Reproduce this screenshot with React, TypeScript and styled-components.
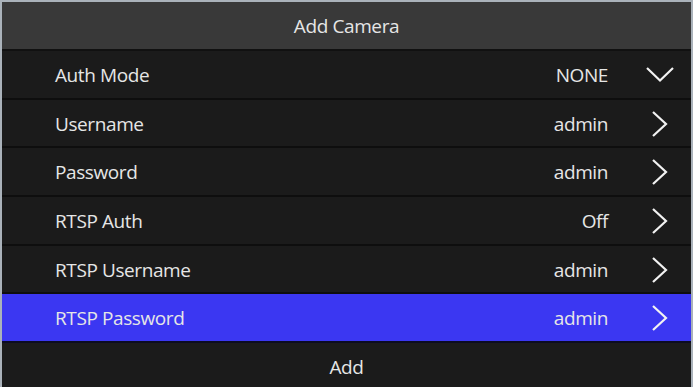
import React from "react";
import styled, { createGlobalStyle } from "styled-components";

interface Setting {
  label: string;
  value: string;
  kind: "down" | "right";
}

const settings: Setting[] = [
  { label: "Auth Mode", value: "NONE", kind: "down" },
  { label: "Username", value: "admin", kind: "right" },
  { label: "Password", value: "admin", kind: "right" },
  { label: "RTSP Auth", value: "Off", kind: "right" },
  { label: "RTSP Username", value: "admin", kind: "right" },
  { label: "RTSP Password", value: "admin", kind: "right" },
];

const ChevronRight = () => (
  <svg width="18" height="28" viewBox="0 0 18 28">
    <polyline points="2,2 15,14 2,26" fill="none" stroke="#f2f2f2" strokeWidth="2.2" />
  </svg>
);

const ChevronDown = () => (
  <svg width="30" height="17" viewBox="0 0 30 17">
    <polyline points="2,2 15,14.5 28,2" fill="none" stroke="#f2f2f2" strokeWidth="2.2" />
  </svg>
);

const App = () => {
  return (
    <>
      <GlobalStyle />
      <Panel>
        <Title>Add Camera</Title>
        <List>
          {settings.map((s, i) => (
            <Row key={s.label} active={i === settings.length - 1}>
              <Label>{s.label}</Label>
              <Value>{s.value}</Value>
              <IconSlot>{s.kind === "down" ? <ChevronDown /> : <ChevronRight />}</IconSlot>
            </Row>
          ))}
        </List>
        <AddButton>Add</AddButton>
      </Panel>
    </>
  );
};

export default App;

const GlobalStyle = createGlobalStyle`
  html, body {
    margin: 0;
    padding: 0;
    width: 693px;
    height: 387px;
    overflow: hidden;
    background: #aab2ba;
  }
`;

const Panel = styled.div`
  margin: 2px 2px 0 2px;
  width: 689px;
  height: 385px;
  display: flex;
  flex-direction: column;
  background: #1a1a1a;
  font-family: "Open Sans", "Noto Sans", sans-serif;
  font-size: 19px;
  letter-spacing: -0.4px;
  color: #e6e6e6;
`;

const Title = styled.div`
  height: 46px;
  padding-top: 1px;
  flex: none;
  background: #393939;
  border-bottom: 2px solid #111;
  display: flex;
  align-items: center;
  justify-content: center;
`;

const List = styled.div`
  display: flex;
  flex-direction: column;
`;

const Row = styled.div<{ active?: boolean }>`
  height: 45.7px;
  padding-top: 1px;
  border-bottom: 2px solid ${({ active }) => (active ? "#0c0c22" : "#0e0e0e")};
  background: ${({ active }) => (active ? "#3b37f2" : "#1b1b1b")};
  display: flex;
  align-items: center;
  padding-left: 53px;
`;

const Label = styled.div`
  flex: 1;
`;

const Value = styled.div`
  width: 120px;
  margin-right: 21px;
  text-align: right;
`;

const IconSlot = styled.div`
  width: 62px;
  display: flex;
  justify-content: center;
  align-items: center;
`;

const AddButton = styled.div`
  flex: 1;
  padding-top: 3px;
  display: flex;
  align-items: center;
  justify-content: center;
  background: #1b1b1b;
`;
